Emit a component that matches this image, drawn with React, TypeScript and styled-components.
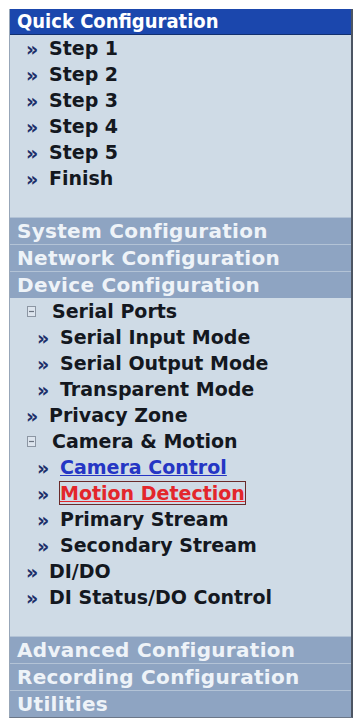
import styled, { createGlobalStyle } from 'styled-components'

const GlobalStyle = createGlobalStyle`
  html, body {
    margin: 0;
    padding: 0;
    background: #ffffff;
  }
  body {
    font-family: "DejaVu Sans", Verdana, sans-serif;
  }
`

type Item =
  | { kind: 'link'; label: string; level: 0 | 1; state?: 'visited' | 'active' }
  | { kind: 'folder'; label: string }

const quickItems: Item[] = [
  { kind: 'link', label: 'Step 1', level: 0 },
  { kind: 'link', label: 'Step 2', level: 0 },
  { kind: 'link', label: 'Step 3', level: 0 },
  { kind: 'link', label: 'Step 4', level: 0 },
  { kind: 'link', label: 'Step 5', level: 0 },
  { kind: 'link', label: 'Finish', level: 0 },
]

const deviceItems: Item[] = [
  { kind: 'folder', label: 'Serial Ports' },
  { kind: 'link', label: 'Serial Input Mode', level: 1 },
  { kind: 'link', label: 'Serial Output Mode', level: 1 },
  { kind: 'link', label: 'Transparent Mode', level: 1 },
  { kind: 'link', label: 'Privacy Zone', level: 0 },
  { kind: 'folder', label: 'Camera & Motion' },
  { kind: 'link', label: 'Camera Control', level: 1, state: 'visited' },
  { kind: 'link', label: 'Motion Detection', level: 1, state: 'active' },
  { kind: 'link', label: 'Primary Stream', level: 1 },
  { kind: 'link', label: 'Secondary Stream', level: 1 },
  { kind: 'link', label: 'DI/DO', level: 0 },
  { kind: 'link', label: 'DI Status/DO Control', level: 0 },
]

function MinusBox() {
  return (
    <svg width="9" height="11" viewBox="0 0 9 11">
      <rect x="0.5" y="0.5" width="8" height="10" fill="#dde5ee" stroke="#8c96a3" />
      <line x1="2" y1="5.5" x2="7" y2="5.5" stroke="#6b7480" strokeWidth="1.2" />
    </svg>
  )
}

function ItemList({ items }: { items: Item[] }) {
  return (
    <List>
      {items.map((item) =>
        item.kind === 'folder' ? (
          <Row key={item.label} $indent={17}>
            <Box>
              <MinusBox />
            </Box>
            <Label>{item.label}</Label>
          </Row>
        ) : (
          <Row key={item.label} $indent={item.level === 1 ? 27 : 16}>
            <Arrow>»</Arrow>
            {item.state ? (
              <LinkText $state={item.state}>{item.label}</LinkText>
            ) : (
              <Label>{item.label}</Label>
            )}
          </Row>
        ),
      )}
    </List>
  )
}

export default function App() {
  return (
    <>
      <GlobalStyle />
      <Panel>
        <MainHeader>Quick Configuration</MainHeader>
        <ItemList items={quickItems} />
        <Band>System Configuration</Band>
        <Band>Network Configuration</Band>
        <Band>Device Configuration</Band>
        <ItemList items={deviceItems} />
        <Band>Advanced Configuration</Band>
        <Band>Recording Configuration</Band>
        <Band>Utilities</Band>
      </Panel>
    </>
  )
}

const Panel = styled.div`
  margin: 9px 2px 0 9px;
  width: 341px;
  background: #cfdbe6;
  border-left: 1px solid #97a6b8;
  border-right: 2px solid #4c5563;
  border-bottom: 1px solid #6c7788;
  display: flex;
  flex-direction: column;
`

const MainHeader = styled.div`
  height: 25px;
  line-height: 25px;
  padding-left: 7px;
  background: #1b47ad;
  border-bottom: 1px solid #12306f;
  color: #ffffff;
  font-family: "DejaVu Sans Condensed", "DejaVu Sans", sans-serif;
  font-stretch: condensed;
  font-weight: bold;
  font-size: 20px;
`

const Band = styled.div`
  height: 26px;
  line-height: 26px;
  padding-left: 7px;
  background: #8ea4c2;
  border-top: 1px solid #b3c3d6;
  color: #eef3f8;
  font-weight: bold;
  font-size: 20px;
  letter-spacing: 0.3px;
`

const List = styled.div`
  display: flex;
  flex-direction: column;
  padding: 0 0 26px 0;
`

const Row = styled.div<{ $indent: number }>`
  display: flex;
  align-items: center;
  height: 26px;
  padding-left: ${(p) => p.$indent}px;
  gap: 4px;
`

const Arrow = styled.span`
  width: 19px;
  color: #1d2f6a;
  font-weight: bold;
  font-size: 19px;
  line-height: 1;
  padding-top: 2px;
`

const Box = styled.span`
  display: flex;
  width: 21px;
`

const Label = styled.span`
  color: #14181f;
  font-weight: bold;
  font-size: 19px;
`

const LinkText = styled.span<{ $state: 'visited' | 'active' }>`
  color: ${(p) => (p.$state === 'active' ? '#e3262b' : '#2536c4')};
  font-weight: bold;
  font-size: 19px;
  text-decoration: underline;
  outline: ${(p) => (p.$state === 'active' ? '1px solid #6a2a2a' : 'none')};
`
